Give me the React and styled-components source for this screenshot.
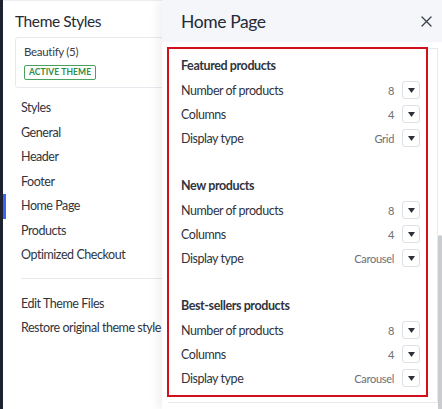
import React from "react";
import styled, { createGlobalStyle } from "styled-components";

const GlobalStyle = createGlobalStyle`
  html, body {
    margin: 0;
    padding: 0;
    background: #fff;
  }
  body {
    font-family: "Lato", "Open Sans", sans-serif;
    color: #313440;
  }
`;

const sections = [
  { title: "Featured products", rows: [["Number of products", "8"], ["Columns", "4"], ["Display type", "Grid"]] },
  { title: "New products", rows: [["Number of products", "8"], ["Columns", "4"], ["Display type", "Carousel"]] },
  { title: "Best-sellers products", rows: [["Number of products", "8"], ["Columns", "4"], ["Display type", "Carousel"]] },
];

const navItems = ["Styles", "General", "Header", "Footer", "Home Page", "Products", "Optimized Checkout"];

const Caret = () => (
  <svg width="7" height="5" viewBox="0 0 7 5">
    <path d="M0 0 H7 L3.5 5 Z" fill="#2b2f3a" />
  </svg>
);

const CloseIcon = () => (
  <svg width="11" height="11" viewBox="0 0 11 11">
    <path d="M1 1 L10 10 M10 1 L1 10" stroke="#3a3d48" strokeWidth="1.3" strokeLinecap="round" />
  </svg>
);

const App = () => {
  return (
    <>
      <GlobalStyle />
      <Page>
        <DarkStrip />
        <Sidebar>
          <SideTitle>Theme Styles</SideTitle>
          <ThemeCard>
            <ThemeName>Beautify (5)</ThemeName>
            <Badge>Active Theme</Badge>
          </ThemeCard>
          <NavList $top={8}>
            {navItems.map((item) => (
              <NavItem key={item} $active={item === "Home Page"}>
                {item}
              </NavItem>
            ))}
          </NavList>
          <Divider />
          <NavList $top={11}>
            <NavItem>Edit Theme Files</NavItem>
            <NavItem>Restore original theme style</NavItem>
          </NavList>
        </Sidebar>
        <Panel>
          <PanelHeader>
            <PanelTitle>Home Page</PanelTitle>
            <CloseButton>
              <CloseIcon />
            </CloseButton>
          </PanelHeader>
          <PanelBody>
            <Content>
              <Card>
                <Highlight>
                  {sections.map((section) => (
                    <Section key={section.title}>
                      <SectionTitle>{section.title}</SectionTitle>
                      {section.rows.map(([label, value]) => (
                        <Row key={label}>
                          <Label>{label}</Label>
                          <Value>{value}</Value>
                          <Dropdown>
                            <Caret />
                          </Dropdown>
                        </Row>
                      ))}
                    </Section>
                  ))}
                </Highlight>
              </Card>
            </Content>
            <ScrollTrack>
              <ScrollThumb />
            </ScrollTrack>
          </PanelBody>
        </Panel>
      </Page>
    </>
  );
};

export default App;

const Page = styled.div`
  display: flex;
  width: 442px;
  height: 409px;
  overflow: hidden;
`;

const DarkStrip = styled.div`
  width: 3px;
  flex-shrink: 0;
  background: #1e2230;
`;

const Sidebar = styled.div`
  width: 159px;
  flex-shrink: 0;
  overflow: hidden;
  background: #fff;
  border-top: 1px solid #eceef2;
  padding-top: 9px;
  box-sizing: border-box;
`;

const SideTitle = styled.h2`
  margin: 0 0 0 12px;
  font-size: 15.5px;
  font-weight: 400;
  letter-spacing: -0.4px;
  line-height: 22px;
  color: #262a36;
  white-space: nowrap;
`;

const ThemeCard = styled.div`
  margin: 5px 0 0 12px;
  width: 170px;
  height: 51px;
  box-sizing: border-box;
  border: 1px solid #e7e9ee;
  border-radius: 3px;
  padding: 7px 0 0 8px;
`;

const ThemeName = styled.div`
  font-size: 11.5px;
  letter-spacing: -0.3px;
  line-height: 14px;
  color: #3a3d48;
`;

const Badge = styled.span`
  display: inline-block;
  margin-top: 4px;
  height: 15px;
  line-height: 13px;
  box-sizing: border-box;
  padding: 0 4px;
  border: 1px solid #4aa05f;
  border-radius: 2px;
  font-size: 8.5px;
  font-weight: 700;
  letter-spacing: 0.1px;
  text-transform: uppercase;
  color: #2f8c45;
`;

const NavList = styled.div`
  display: flex;
  flex-direction: column;
  padding-top: ${(p) => p.$top}px;
`;

const NavItem = styled.div`
  position: relative;
  height: 24.5px;
  line-height: 24.5px;
  padding-left: 18px;
  font-size: 12.5px;
  letter-spacing: -0.45px;
  color: #313440;
  white-space: nowrap;

  &::before {
    content: "";
    display: ${(p) => (p.$active ? "block" : "none")};
    position: absolute;
    left: 0;
    top: 0;
    width: 3px;
    height: 100%;
    background: #3c64f0;
  }
`;

const Divider = styled.div`
  margin: 10px 0 2px 18px;
  height: 1px;
  background: #e8eaee;
`;

const Panel = styled.div`
  position: relative;
  flex: 1;
  display: flex;
  flex-direction: column;
  background: #fff;
  box-shadow: -3px 0 10px rgba(20, 30, 50, 0.08);
`;

const PanelHeader = styled.div`
  height: 42px;
  flex-shrink: 0;
  display: flex;
  align-items: center;
  justify-content: space-between;
  padding: 0 10px 0 19px;
  background: #f4f6fa;
`;

const PanelTitle = styled.h1`
  margin: 0;
  font-size: 17.5px;
  letter-spacing: -0.4px;
  font-weight: 400;
  color: #262a36;
`;

const CloseButton = styled.div`
  display: flex;
  align-items: center;
  justify-content: center;
  width: 12px;
  height: 12px;
`;

const PanelBody = styled.div`
  flex: 1;
  display: flex;
  min-height: 0;
`;

const Content = styled.div`
  flex: 1;
  padding: 6px 0 0 6px;
`;

const Card = styled.div`
  height: 355px;
  box-sizing: border-box;
  border: 1px solid #e7e9ee;
  border-left: none;
  padding: 0 9px 0 0;
`;

const Highlight = styled.div`
  margin: -2px 0 0 -1px;
  border: 2px solid #d2101c;
  padding: 5px 6px 5px 12px;
`;

const Section = styled.div`
  margin-bottom: 24px;

  &:last-child {
    margin-bottom: 0;
  }
`;

const SectionTitle = styled.div`
  height: 24px;
  line-height: 24px;
  font-size: 12.5px;
  font-weight: 700;
  letter-spacing: -0.4px;
  color: #313440;
`;

const Row = styled.div`
  display: flex;
  align-items: center;
  height: 24px;
`;

const Label = styled.span`
  flex: 1;
  font-size: 12.5px;
  letter-spacing: -0.45px;
  color: #313440;
`;

const Value = styled.span`
  font-size: 11px;
  letter-spacing: -0.3px;
  color: #6b6e78;
  margin-right: 8px;
`;

const Dropdown = styled.div`
  width: 18px;
  height: 18px;
  box-sizing: border-box;
  border: 1px solid #dcdfe5;
  border-radius: 3px;
  display: flex;
  align-items: center;
  justify-content: center;
  background: #fff;
`;

const ScrollTrack = styled.div`
  width: 4px;
  padding-top: 193px;
  flex-shrink: 0;
`;

const ScrollThumb = styled.div`
  height: 200px;
  background: #c9ccd1;
  border-radius: 2px;
`;
